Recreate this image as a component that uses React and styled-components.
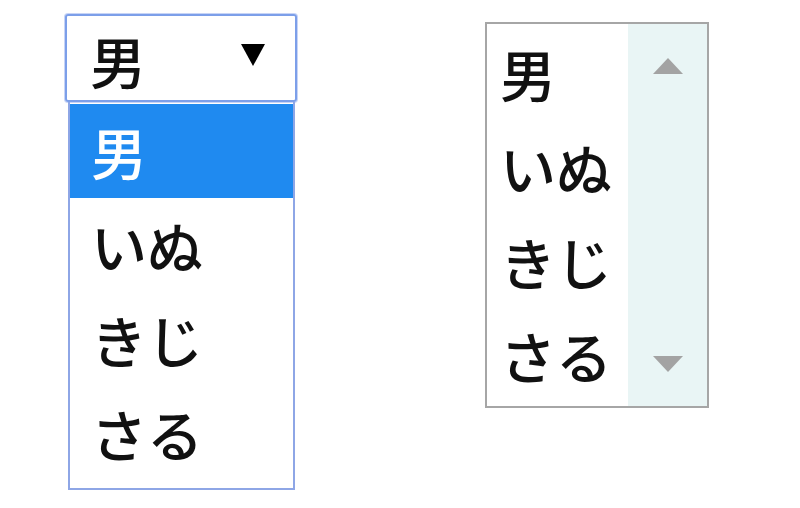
import React from "react"
import styled, { createGlobalStyle } from "styled-components"

const items = ["男", "いぬ", "きじ", "さる"]

const Global = createGlobalStyle`
  html, body {
    margin: 0;
    padding: 0;
    background: #fff;
  }
  body {
    font-family: "Noto Sans CJK JP", "Noto Sans", sans-serif;
    color: #111;
  }
`

const App = () => {
  return (
    <Page>
      <Global />
      <DropColumn>
        <SelectBox>
          <SelectText>男</SelectText>
          <Arrow>
            <svg width="24" height="22" viewBox="0 0 24 22">
              <polygon points="0,0 24,0 12,22" fill="#000" />
            </svg>
          </Arrow>
        </SelectBox>
        <DropList>
          {items.map((it, i) => (
            <DropItem key={it} $active={i === 0}>{it}</DropItem>
          ))}
        </DropList>
      </DropColumn>
      <ListBox>
        <ListItems>
          {items.map((it) => (
            <ListItem key={it}>{it}</ListItem>
          ))}
        </ListItems>
        <ScrollBar>
          <svg width="30" height="16" viewBox="0 0 30 16">
            <polygon points="0,16 30,16 15,0" fill="#a3a3a3" />
          </svg>
          <svg width="30" height="16" viewBox="0 0 30 16">
            <polygon points="0,0 30,0 15,16" fill="#a3a3a3" />
          </svg>
        </ScrollBar>
      </ListBox>
    </Page>
  )
}

const Page = styled.div`
  display: flex;
  align-items: flex-start;
  gap: 188px;
  padding: 14px 0 0 65px;
  height: 508px;
  box-sizing: border-box;
`

const DropColumn = styled.div`
  width: 232px;
  display: flex;
  flex-direction: column;
`

const SelectBox = styled.div`
  height: 88px;
  box-sizing: border-box;
  border: 2px solid #7c9fe9;
  border-radius: 3px;
  box-shadow: 0 0 0 1px rgba(130, 160, 235, 0.45);
  display: flex;
  align-items: center;
  justify-content: space-between;
  padding: 0 30px 0 23px;
`

const SelectText = styled.span`
  font-size: 56px;
  font-weight: 500;
  line-height: 1;
  margin-top: 4px;
`

const Arrow = styled.span`
  display: flex;
  margin-top: -6px;
`

const DropList = styled.div`
  margin: 0 2px 0 3px;
  border: 2px solid #8ea6e6;
  border-top: none;
  padding: 2px 0 8px;
  display: flex;
  flex-direction: column;
`

const DropItem = styled.div`
  height: 94px;
  line-height: 94px;
  font-size: 56px;
  font-weight: 500;
  padding-left: 21px;
  background: ${(p) => (p.$active ? "#1f8af0" : "transparent")};
  color: ${(p) => (p.$active ? "#fff" : "#111")};
`

const ListBox = styled.div`
  margin-top: 8px;
  width: 224px;
  height: 386px;
  box-sizing: border-box;
  border: 2px solid #a6a6a6;
  display: flex;
`

const ListItems = styled.div`
  flex: 1;
  display: flex;
  flex-direction: column;
  padding-top: 2px;
`

const ListItem = styled.div`
  height: 94px;
  line-height: 94px;
  font-size: 56px;
  font-weight: 500;
  padding-left: 13px;
`

const ScrollBar = styled.div`
  width: 79px;
  background: #e9f5f5;
  display: flex;
  flex-direction: column;
  align-items: center;
  justify-content: space-between;
  padding: 34px 0 34px;
  box-sizing: border-box;
`

export default App
